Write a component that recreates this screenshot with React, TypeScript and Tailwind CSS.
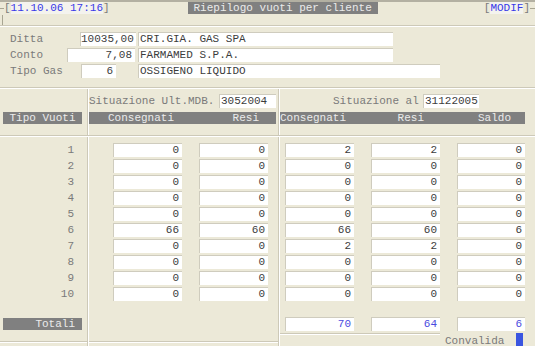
import React from "react";

const rows = [
  { n: 1, a: 0, b: 0, c: 2, d: 2, s: 0 },
  { n: 2, a: 0, b: 0, c: 0, d: 0, s: 0 },
  { n: 3, a: 0, b: 0, c: 0, d: 0, s: 0 },
  { n: 4, a: 0, b: 0, c: 0, d: 0, s: 0 },
  { n: 5, a: 0, b: 0, c: 0, d: 0, s: 0 },
  { n: 6, a: 66, b: 60, c: 66, d: 60, s: 6 },
  { n: 7, a: 0, b: 0, c: 2, d: 2, s: 0 },
  { n: 8, a: 0, b: 0, c: 0, d: 0, s: 0 },
  { n: 9, a: 0, b: 0, c: 0, d: 0, s: 0 },
  { n: 10, a: 0, b: 0, c: 0, d: 0, s: 0 },
];

// white sunken field
const Field = ({
  value,
  w,
  align = "right",
  blue = false,
}: {
  value: string | number;
  w: string;
  align?: "left" | "right";
  blue?: boolean;
}) => (
  <div
    className={`${w} h-[14px] shrink-0 bg-white border-t border-l border-[#cfccbe] leading-[13px] whitespace-pre ${
      align === "right" ? "text-right pr-[3px]" : "text-left pl-[1px]"
    } ${blue ? "text-[#4a4ae0]" : "text-[#3c3c3c]"}`}
  >
    {value}
  </div>
);

const HLine = () => <div className="h-[2px] w-full border-t border-[#cdc9b8] border-b border-b-white" />;
const VLine = () => <div className="w-[2px] self-stretch border-l border-[#cdc9b8] border-r border-r-white" />;

export default function App() {
  return (
    <div
      className="w-[535px] h-[346px] bg-[#ece9d8] overflow-hidden text-[11px] leading-[14px] text-[#7a7a7a] border-t-2 border-[#b3b0a2]"
      style={{ fontFamily: '"Liberation Mono", "Courier New", monospace' }}
    >
      {/* title row */}
      <div className="flex h-[23px]">
        <div className="flex flex-col">
          <div className="flex items-start">
            <div className="w-[4px] mt-[6px] border-t border-[#a8a592]" />
            <span className="leading-[13px]">
              [<span className="text-[#3838e8] bg-[#f4f3ee]">11.10.06 17:16</span>]
            </span>
          </div>
          <div className="ml-[2px] w-px flex-1 bg-[#a8a592]" />
        </div>
        <div className="ml-[78px] w-[190px] h-[12px] bg-[#808080] text-[#ebebeb] text-center leading-[12px]">
          Riepilogo vuoti per cliente
        </div>
        <div className="ml-auto flex items-start">
          <span className="leading-[13px]">
            [<span className="text-[#3838e8] bg-[#f4f3ee]">MODIF</span>]
          </span>
          <div className="w-[5px] mt-[6px] border-t border-[#a8a592]" />
        </div>
      </div>
      <HLine />

      {/* client data */}
      <div className="h-[60px] pt-[5px] flex flex-col gap-[2px]">
        <div className="flex items-center h-[14px]">
          <span className="w-[80px] pl-[10px]">Ditta</span>
          <Field value="10035,00" w="w-[56px]" />
          <div className="ml-[2px]">
            <Field value="CRI.GIA. GAS SPA" w="w-[255px]" align="left" />
          </div>
        </div>
        <div className="flex items-center h-[14px]">
          <span className="w-[67px] pl-[10px]">Conto</span>
          <Field value="7,08" w="w-[68px]" />
          <div className="ml-[3px]">
            <Field value="FARMAMED S.P.A." w="w-[255px]" align="left" />
          </div>
        </div>
        <div className="flex items-center h-[14px]">
          <span className="w-[81px] pl-[10px] whitespace-pre">Tipo Gas</span>
          <Field value="6" w="w-[35px]" />
          <div className="ml-[22px]">
            <Field value="OSSIGENO LIQUIDO" w="w-[302px]" align="left" />
          </div>
        </div>
      </div>
      <HLine />

      {/* headers */}
      <div className="flex h-[46px]">
        <div className="w-[87px] flex flex-col">
          <div className="mt-[23px] ml-[3px] w-[79px] h-[12px] bg-[#808080] text-[#ebebeb] text-center leading-[12px] whitespace-pre">
            Tipo Vuoti
          </div>
        </div>
        <VLine />
        <div className="w-[189px] flex flex-col">
          <div className="mt-[5px] flex items-center h-[14px]">
            <span className="w-[130px] whitespace-pre">Situazione Ult.MDB.</span>
            <Field value="3052004" w="w-[57px]" align="left" />
          </div>
          <div className="mt-[4px] w-[187px] h-[12px] bg-[#808080] text-[#ebebeb] leading-[12px] flex justify-between pl-[19px] pr-[17px]">
            <span>Consegnati</span>
            <span>Resi</span>
          </div>
        </div>
        <VLine />
        <div className="flex-1 flex flex-col">
          <div className="mt-[5px] flex items-center h-[14px]">
            <span className="ml-[53px] w-[90px] whitespace-pre">Situazione al</span>
            <Field value="31122005" w="w-[56px]" align="left" />
          </div>
          <div className="mt-[4px] w-[245px] h-[12px] bg-[#808080] text-[#ebebeb] leading-[12px] flex">
            <span className="w-[86px]">Consegnati</span>
            <span className="w-[58px] text-right">Resi</span>
            <span className="w-[87px] text-right">Saldo</span>
          </div>
        </div>
      </div>
      <HLine />

      {/* body */}
      <div className="flex h-[209px]">
        <div className="w-[87px] flex flex-col">
          <div className="pt-[6px] flex flex-col gap-[2px]">
            {rows.map((r) => (
              <div key={r.n} className="h-[14px] leading-[14px] text-right pr-[13px]">
                {r.n}
              </div>
            ))}
          </div>
          <div className="mt-[17px] ml-[3px] w-[79px] h-[12px] bg-[#808080] text-[#ebebeb] leading-[12px] text-right pr-[7px]">
            Totali
          </div>
          <div className="mt-auto mb-[3px]">
            <HLine />
          </div>
        </div>
        <VLine />
        <div className="w-[189px] flex flex-col">
          <div className="pt-[6px] pl-[24px] flex flex-col gap-[2px]">
            {rows.map((r) => (
              <div key={r.n} className="flex gap-[17px]">
                <Field value={r.a} w="w-[69px]" />
                <Field value={r.b} w="w-[69px]" />
              </div>
            ))}
          </div>
          <div className="mt-auto mb-[3px]">
            <HLine />
          </div>
        </div>
        <VLine />
        <div className="flex-1 flex flex-col">
          <div className="pt-[6px] pl-[5px] flex flex-col gap-[2px]">
            {rows.map((r) => (
              <div key={r.n} className="flex gap-[17px]">
                <Field value={r.c} w="w-[69px]" />
                <Field value={r.d} w="w-[69px]" />
                <Field value={r.s} w="w-[68px]" />
              </div>
            ))}
          </div>
          <div className="mt-[16px] pl-[5px] flex gap-[17px]">
            <Field value={70} w="w-[69px]" blue />
            <Field value={64} w="w-[69px]" blue />
            <Field value={6} w="w-[68px]" blue />
          </div>
          <div className="mt-[2px] flex items-start">
            <div className="w-[160px] h-[2px] border-t border-[#cdc9b8] border-b border-b-white" />
            <span className="ml-[5px] mt-[2px] leading-[12px]">Convalida</span>
            <div className="ml-[12px] w-[7px] h-[13px] bg-[#3a55e0]" />
          </div>
        </div>
      </div>
    </div>
  );
}
